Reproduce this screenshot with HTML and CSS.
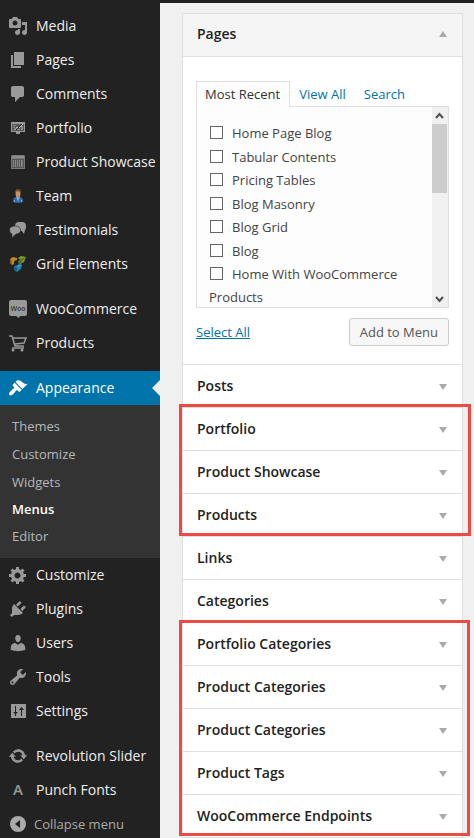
FILE: index.html
```html
<!DOCTYPE html>
<html lang="en">
<head>
<meta charset="utf-8">
<meta name="viewport" content="width=device-width, initial-scale=1">
<title>Menus</title>
<link rel="stylesheet" href="styles.css">
</head>
<body>
<div class="topbar"></div>
<div class="layout">
  <nav class="sidebar" aria-label="Main menu">
    <ul class="menu">
      <li><a href="#"><svg class="icon" viewBox="0 0 20 20"><path d="M13 11V4c0-.55-.45-1-1-1h-1.67L9 1H5L3.67 3H2c-.55 0-1 .45-1 1v7c0 .55.45 1 1 1h10c.55 0 1-.45 1-1zM7 4.500c1.380 0 2.500 1.120 2.500 2.500S8.380 9.500 7 9.500 4.500 8.380 4.500 7 5.620 4.500 7 4.500zM14 6h5v10.500c0 1.380-1.120 2.500-2.500 2.500S14 17.880 14 16.500s1.120-2.500 2.500-2.500c.17 0 .34.02.5.05V9h-3V6zm-4 8.050V13h2v3.500c0 1.380-1.120 2.500-2.500 2.500S7 17.880 7 16.500 8.120 14 9.500 14c.17 0 .34.02.5.05z"/></svg>Media</a></li>
      <li><a href="#"><svg class="icon" viewBox="0 0 20 20"><path d="M6 15V2h10v13H6zm-1 1h8v2H3V5h2v11z"/></svg>Pages</a></li>
      <li><a href="#"><svg class="icon" viewBox="0 0 20 20"><path d="M5 2h9q.82 0 1.410.59T16 4v7q0 .82-.59 1.410T14 13h-2l-5 5v-5H5q-.82 0-1.410-.59T3 11V4q0-.82.59-1.410T5 2z"/></svg>Comments</a></li>
      <li><a href="#"><svg class="icon" viewBox="0 0 20 20"><path d="M3 4h14v10H3z"/><path d="M8 14h4v2H8z"/><path fill="#555" d="M4 6h12v7H4z"/><path fill="#8a8a8a" d="M5 7h3v1H5zM5 9h2v1H5zM13 8h2v4h-2zM5 11h7v1H5z"/><path fill="none" stroke="#c4c4c4" d="M7 12l2-3 2 1 4-4"/><path fill="none" stroke="#222" d="M8 12l6-6"/></svg>Portfolio</a></li>
      <li><a href="#"><svg class="icon" viewBox="0 0 20 20"><path fill="#777" d="M3 4l1-1h12l1 1v13H3z"/><path fill="#8e8e8e" d="M4 4h12v2H4z"/><path fill="#555" d="M4 7h12v9H4z"/><path fill="#888" d="M5 8h1v7H5zM7 8h1v7H7zM9 8h1v7H9zM11 8h1v7h-1zM13 8h1v7h-1z"/><path fill="#777" d="M14 8h1v7h-1z"/></svg>Product Showcase</a></li>
      <li><a href="#"><svg class="icon" viewBox="0 0 20 20"><path fill="#2f65a0" d="M5 16v-2q0-3 4-3h2q4 0 4 3v2q-5 2-10 0z"/><path fill="#7da7d3" d="M8 11l2 5 2-5zM6 14h1v2H6zM13 14h1v2h-1z"/><ellipse cx="10" cy="7.500" rx="2.500" ry="4" fill="#c5935e"/><path fill="#76502b" d="M7 8V5q1-2 3-2t3 2v3h-1V6L9 5 8 6v2z"/></svg>Team</a></li>
      <li><a href="#"><svg class="icon" viewBox="0 0 20 20"><rect x="7" y="2" width="11" height="9" rx="4"/><path d="M13 10h4l-1 4z"/><path stroke="#222" stroke-width=".6" d="M1.500 10q0-4 5.500-4t5.500 4-4.500 4l-4 4v-4q-2.500-1-2.500-4z"/></svg>Testimonials</a></li>
      <li><a href="#"><svg class="icon" viewBox="0 0 20 20"><path fill="#c28a24" d="M2 5l3-2 4 1v2l-3 1v3l-2 1-2-2z"/><path fill="#916018" d="M2 5l2 2v4L2 9z"/><path fill="#7c9e35" d="M10 4l3-2 5 1-2 5-4 2-2-2 2-2z"/><path fill="#526f29" d="M10 4l3 1 5-2-4 4-1 3-2-2 1-2z"/><path fill="#2381a9" d="M6 12l4-1 1-2 3 2-1 4-4 3-3-2z"/><path fill="#165d82" d="M6 12l3 2v4l-3-2z"/><path fill="#3a9dbe" d="M10 11l4 0-3 2-2-1z"/></svg>Grid Elements</a></li>
      <li class="separated"><a href="#"><svg class="icon" viewBox="0 0 20 20"><path d="M3 1h14q2 0 2 2v12q0 2-2 2h-5l-1 2-3-2H3q-2 0-2-2V3q0-2 2-2z"/><text class="woo" x="10" y="12" text-anchor="middle">Woo</text></svg>WooCommerce</a></li>
      <li><a href="#"><svg class="icon" viewBox="0 0 20 20"><path fill="none" stroke="#999" stroke-width="1.500" d="M1 3h3l3 10h9M5 5h13l-2 5-9 1M4 15h12"/><circle cx="5" cy="17" r="1.500"/><circle cx="14" cy="17" r="1.500"/></svg>Products</a></li>
      <li class="separated current"><a href="#" aria-current="true"><svg class="icon" viewBox="0 0 20 20"><path d="M14.480 11.060L7.410 3.990l1.500-1.500c.5-.56 2.300-.47 3.510.32 1.210.8 1.430 1.280 2.910 2.100 1.180.64 2.450 1.260 4.450.85zm-.71.71L6.700 4.700 4.930 6.470c-.39.39-.39 1.020 0 1.410l1.060 1.060c.39.39.39 1.030 0 1.420-.6.6-1.430 1.110-2.210 1.690-.35.26-.7.53-1.010.84C1.430 14.230.4 16.080 1.400 17.070c.99 1 2.840-.03 4.180-1.360.31-.31.58-.66.85-1.020.57-.78 1.080-1.610 1.690-2.210.39-.39 1.020-.39 1.410 0l1.060 1.060c.39.39 1.020.39 1.410 0z"/></svg>Appearance</a>
        <ul class="submenu">
          <li><a href="#">Themes</a></li>
          <li><a href="#">Customize</a></li>
          <li><a href="#">Widgets</a></li>
          <li><a href="#" class="active">Menus</a></li>
          <li><a href="#">Editor</a></li>
        </ul>
      </li>
      <li><a href="#"><svg class="icon" viewBox="0 0 20 20"><path d="M18 12h-2.180c-.17.7-.44 1.350-.81 1.930l1.540 1.540-2.100 2.100-1.540-1.540c-.58.36-1.230.63-1.910.79V19H8v-2.180c-.68-.16-1.330-.43-1.910-.79l-1.540 1.540-2.120-2.120 1.540-1.540c-.36-.58-.63-1.230-.79-1.910H1V9.030h2.170c.16-.7.44-1.350.8-1.940L2.430 5.550l2.100-2.100 1.540 1.540c.58-.37 1.240-.64 1.930-.81V2h3v2.180c.68.16 1.330.43 1.910.79l1.540-1.540 2.120 2.120-1.540 1.540c.36.59.64 1.240.8 1.940H18V12zm-8.500 1.500c1.660 0 3-1.340 3-3s-1.340-3-3-3-3 1.340-3 3 1.340 3 3 3z"/></svg>Customize</a></li>
      <li><a href="#"><svg class="icon" viewBox="0 0 20 20"><path d="M13.110 4.360L9.870 7.600 8 5.730l3.240-3.240c.35-.34 1.050-.2 1.560.32.52.51.66 1.210.31 1.550zm-8 1.770l.91-1.120 9.010 9.010-1.190.84c-.71.71-2.630 1.160-3.820 1.160H6.140L4.900 17.260c-.59.59-1.540.59-2.120 0-.59-.58-.59-1.530 0-2.120l1.240-1.240v-3.880c0-1.130.4-3.190 1.090-3.890zm7.260 3.970l3.240-3.240c.34-.35 1.040-.21 1.550.31.52.51.66 1.210.31 1.550l-3.240 3.250z"/></svg>Plugins</a></li>
      <li><a href="#"><svg class="icon" viewBox="0 0 20 20"><path d="M10 9.250c-2.270 0-2.730-3.440-2.730-3.440C7 4.020 7.820 2 9.970 2c2.160 0 2.980 2.020 2.710 3.810 0 0-.41 3.440-2.680 3.440zm0 2.570L12.720 10c2.390 0 4.520 2.330 4.520 4.530v2.490s-3.650 1.130-7.240 1.130c-3.650 0-7.240-1.130-7.240-1.130v-2.490c0-2.250 1.940-4.480 4.470-4.480z"/></svg>Users</a></li>
      <li><a href="#"><svg class="icon" viewBox="0 0 20 20"><path d="M16.680 9.770c-1.340 1.340-3.300 1.670-4.950.99l-5.410 6.520c-.99.99-2.590.99-3.580 0s-.99-2.590 0-3.570l6.520-5.420c-.68-1.650-.35-3.610.99-4.950 1.280-1.280 3.120-1.620 4.720-1.060l-2.890 2.890 2.820 2.820 2.860-2.870c.53 1.580.18 3.390-1.080 4.650zM3.810 16.210c.4.39 1.040.39 1.430 0 .4-.4.4-1.040 0-1.430-.39-.4-1.030-.4-1.430 0-.39.39-.39 1.030 0 1.430z"/></svg>Tools</a></li>
      <li><a href="#"><svg class="icon" viewBox="0 0 20 20"><path d="M3 3h15v14H3z"/><path fill="#222" d="M7 5h1v6h2l-2 2v2H7v-2l-2-2h2zM13 15V9h-2l2.500-3L16 9h-2v6z"/></svg>Settings</a></li>
      <li class="separated"><a href="#"><svg class="icon" viewBox="0 0 20 20"><path d="M10.200 3.280c3.530 0 6.430 2.610 6.920 6h2.080l-3.500 4-3.500-4h2.320c-.45-1.970-2.210-3.450-4.320-3.450-1.450 0-2.730.71-3.540 1.780L4.950 5.660C6.230 4.200 8.110 3.280 10.200 3.280zm-.4 13.440c-3.520 0-6.430-2.610-6.920-6H.8l3.500-4c1.170 1.330 2.330 2.670 3.500 4H5.480c.45 1.970 2.210 3.450 4.320 3.450 1.450 0 2.730-.71 3.540-1.780l1.710 1.950c-1.280 1.460-3.150 2.380-5.250 2.380z"/></svg>Revolution Slider</a></li>
      <li><a href="#"><span class="icon letter" aria-hidden="true">A</span>Punch Fonts</a></li>
    </ul>
    <button class="collapse" type="button"><svg class="icon" viewBox="0 0 20 20"><circle cx="10" cy="10" r="8"/><path fill="#222" d="M12 6v8l-5-4z"/></svg>Collapse menu</button>
  </nav>

  <main class="content">
    <div class="accordion">
      <section class="panel">
        <button class="panel-title open" type="button" aria-expanded="true">Pages<span class="arrow up"></span></button>
        <div class="panel-body">
          <div class="tabs">
            <a href="#" class="tab selected">Most Recent</a>
            <a href="#" class="tab">View All</a>
            <a href="#" class="tab">Search</a>
          </div>
          <div class="page-box">
            <ul class="page-list">
              <li><label><input type="checkbox">Home Page Blog</label></li>
              <li><label><input type="checkbox">Tabular Contents</label></li>
              <li><label><input type="checkbox">Pricing Tables</label></li>
              <li><label><input type="checkbox">Blog Masonry</label></li>
              <li><label><input type="checkbox">Blog Grid</label></li>
              <li><label><input type="checkbox">Blog</label></li>
              <li><label><input type="checkbox">Home With WooCommerce Products</label></li>
            </ul>
            <div class="scrollbar" aria-hidden="true">
              <svg viewBox="0 0 16 17"><path d="M4 11l3.500-4 3.500 4"/></svg>
              <div class="track"><div class="thumb"></div></div>
              <svg viewBox="0 0 16 17"><path d="M4 7l3.500 4 3.500-4"/></svg>
            </div>
          </div>
          <div class="actions">
            <a href="#" class="select-all">Select All</a>
            <button class="add" type="button">Add to Menu</button>
          </div>
        </div>
      </section>
      <button class="panel-title" type="button">Posts<span class="arrow"></span></button>
      <div class="group">
        <button class="panel-title" type="button">Portfolio<span class="arrow"></span></button>
        <button class="panel-title" type="button">Product Showcase<span class="arrow"></span></button>
        <button class="panel-title" type="button">Products<span class="arrow"></span></button>
      </div>
      <button class="panel-title" type="button">Links<span class="arrow"></span></button>
      <button class="panel-title" type="button">Categories<span class="arrow"></span></button>
      <div class="group taxonomy">
        <button class="panel-title" type="button">Portfolio Categories<span class="arrow"></span></button>
        <button class="panel-title" type="button">Product Categories<span class="arrow"></span></button>
        <button class="panel-title" type="button">Product Categories<span class="arrow"></span></button>
        <button class="panel-title" type="button">Product Tags<span class="arrow"></span></button>
        <button class="panel-title" type="button">WooCommerce Endpoints<span class="arrow"></span></button>
      </div>
    </div>
  </main>
</div>
</body>
</html>
```
FILE: styles.css
```css
* {
  box-sizing: border-box;
}

body {
  margin: 0;
  height: 100vh;
  overflow: hidden;
  background: #f0f0f0;
  color: #444;
  font-family: "Open Sans", sans-serif;
  font-size: 13px;
}

ul {
  margin: 0;
  padding: 0;
  list-style: none;
}

a {
  color: #0073aa;
  text-decoration: none;
}

button {
  font: inherit;
  cursor: pointer;
}

.topbar {
  height: 3px;
  background: #222;
}

.layout {
  display: grid;
  grid-template-columns: 160px 1fr;
}

/* Sidebar */
.sidebar {
  padding-top: 6px;
  background: #222;
}

.menu a {
  display: flex;
  align-items: center;
  gap: 8px;
  height: 34px;
  padding: 0 0 2px 8px;
  color: #eee;
  font-size: 14px;
  white-space: nowrap;
}

.separated {
  margin-top: 11px;
}

.icon {
  flex: none;
  width: 20px;
  height: 20px;
  fill: #999;
}

.menu .icon {
  margin-top: 2px;
}

.menu .letter {
  margin-top: 0;
  color: #999;
  font-size: 15px;
  font-weight: 600;
  line-height: 20px;
  text-align: center;
}

.woo {
  fill: #333;
  font-size: 7px;
  font-weight: 600;
}

.current > a {
  position: relative;
  background: #0073aa;
  color: #fff;
}

.current > a .icon {
  fill: #fff;
}

.current > a::after {
  content: "";
  position: absolute;
  top: 9px;
  right: 0;
  border: 8px solid transparent;
  border-left: 0;
  border-right-color: #f0f0f0;
}

.submenu {
  padding: 8px 0;
  background: #333;
}

.submenu a {
  height: 27px;
  padding-left: 12px;
  color: #b4b9be;
  font-size: 13px;
}

.submenu li:nth-child(-n+2) {
  padding-bottom: 1px;
}

.submenu .active {
  color: #fff;
  font-weight: 600;
}

.collapse {
  display: flex;
  align-items: center;
  gap: 6px;
  width: 100%;
  height: 34px;
  padding: 0 0 0 8px;
  border: 0;
  background: none;
  color: #aaa;
}

.collapse .icon {
  fill: #aaa;
}

/* Accordion */
.content {
  padding: 10px 11px 0 22px;
}

.accordion {
  border: 1px solid #dfdfdf;
  background: #fff;
}

.panel-title {
  display: flex;
  align-items: center;
  justify-content: space-between;
  width: 100%;
  height: 43px;
  padding: 0 15px 2px 14px;
  border: 0;
  border-top: 1px solid #dfdfdf;
  background: #fff;
  color: #222;
  font-size: 14px;
  font-weight: 600;
}

.panel-title.open {
  padding-bottom: 4px;
  border-top: 0;
  border-bottom: 1px solid #dfdfdf;
  background: #f5f5f5;
}

.arrow {
  margin-top: 4px;
  border: 4px solid transparent;
  border-top: 6px solid #aaa;
  border-bottom: 0;
}

.arrow.up {
  margin-top: 2px;
  border-top: 0;
  border-bottom: 6px solid #aaa;
}

.panel-body {
  padding: 24px 13px 18px;
}

.tabs {
  display: flex;
}

.tab {
  height: 25px;
  padding: 0 8px;
  border: 1px solid transparent;
  border-bottom: 0;
  line-height: 25px;
}

.tab.selected {
  z-index: 1;
  height: 26px;
  margin-bottom: -1px;
  padding-right: 9px;
  border-color: #dfdfdf;
  background: #fdfdfd;
  color: #333;
}

.page-box {
  display: flex;
  height: 202px;
  border: 1px solid #dfdfdf;
  background: #fdfdfd;
  overflow: hidden;
}

.page-list {
  flex: 1;
  padding: 15px 12px 0;
  line-height: 23px;
}

.page-list li:nth-child(odd) {
  padding-bottom: 1px;
}

.page-list input {
  appearance: none;
  width: 13px;
  height: 13px;
  margin: 0 9px 0 1px;
  border: 1px solid #666;
  background: #fff;
  vertical-align: -1px;
}

.scrollbar {
  display: flex;
  flex-direction: column;
  width: 16px;
  background: #f0f0f0;
}

.scrollbar svg {
  width: 16px;
  height: 17px;
  fill: none;
  stroke: #505050;
  stroke-width: 2;
}

.track {
  flex: 1;
}

.thumb {
  width: 15px;
  height: 69px;
  background: #cdcdcd;
}

.actions {
  display: flex;
  align-items: center;
  justify-content: space-between;
  margin-top: 10px;
}

.select-all {
  text-decoration: underline;
}

.add {
  height: 28px;
  padding: 0 10px;
  border: 1px solid #ccc;
  border-radius: 3px;
  background: #f7f7f7;
  color: #555;
}

/* Highlight frames drawn around related panels */
.group {
  position: relative;
}

.group::after {
  content: "";
  position: absolute;
  inset: -3px -9px 0 -4px;
  border: 3px solid #ea4b44;
  pointer-events: none;
}

.taxonomy::after {
  inset: -2px -8px 1px -4px;
}
```
